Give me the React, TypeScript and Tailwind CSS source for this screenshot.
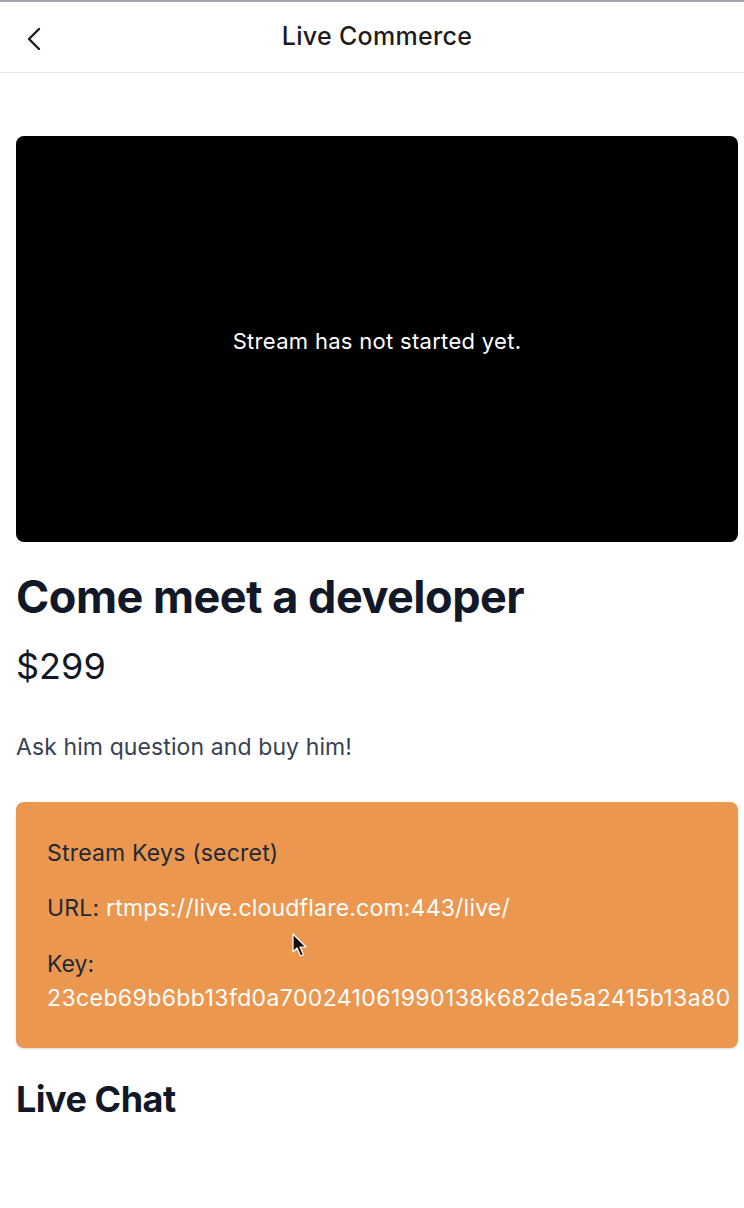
import React from "react";

export default function App() {
  return (
    <div className="w-[744px] min-h-[1208px] bg-white relative overflow-hidden" style={{ fontFamily: "Inter, 'Noto Sans', sans-serif" }}>
      <div className="h-[2px] bg-[#a7a7ad]" />
      <header className="h-[71px] flex items-center justify-center relative border-b border-[#e6e6e6]">
        <button className="absolute left-[22px] top-[22px] text-[#222]">
          <svg width="24" height="30" viewBox="0 0 24 30" fill="none" stroke="#1c1c1e" strokeWidth="2.4" strokeLinecap="round" strokeLinejoin="round">
            <path d="M17 5 L7 15 L17 25" />
          </svg>
        </button>
        <h1 className="text-[25px] text-[#1c1c1e] font-medium tracking-[0.3px] translate-x-[5px]">Live Commerce</h1>
      </header>

      <main className="px-[16px] pt-[63px]">
        <div className="h-[406px] w-[722px] bg-black rounded-[8px] flex items-center justify-center pt-[4px]">
          <span className="text-white text-[22px] tracking-[0.3px]">Stream has not started yet.</span>
        </div>
        <h2 className="mt-[26px] text-[45px] font-bold text-[#111827] leading-[58px] tracking-[-0.5px]">Come meet a developer</h2>
        <p className="mt-[18px] text-[36px] text-[#111827] leading-[44px]">$299</p>
        <p className="mt-[43px] text-[23px] text-[#374151] leading-[32px] tracking-[0.1px]">Ask him question and buy him!</p>

        <div className="relative mt-[39px] w-[722px] h-[246px] bg-[#eb974f] rounded-[8px] px-[31px] pt-[35px] overflow-hidden shadow-[0_1px_2px_rgba(0,0,0,0.15)]">
          <p className="text-[23px] text-[#1f2937] leading-[32px] tracking-[0.2px]">Stream Keys (secret)</p>
          <p className="mt-[23px] text-[23px] text-[#1f2937] leading-[32px] whitespace-nowrap tracking-[0.2px]">
            URL: <span className="text-white">rtmps://live.cloudflare.com:443/live/</span>
          </p>
          <p className="mt-[24px] text-[23px] text-[#1f2937] leading-[32px]">Key:</p>
          <p className="mt-[2px] text-[23px] text-white leading-[32px] whitespace-nowrap tracking-[0.4px]">23ceb69b6bb13fd0a700241061990138k682de5a2415b13a80</p>
          <svg className="absolute left-[276px] top-[131px]" width="16" height="26" viewBox="0 0 16 26">
            <path d="M1 1 L1 19 L5 15 L8.5 23 L11.5 21.8 L8 14 L14 14 Z" fill="#111" stroke="#fff" strokeWidth="1.2" strokeLinejoin="round" />
          </svg>
        </div>

        <h2 className="mt-[29px] text-[36px] font-bold text-[#111827] leading-[44px] tracking-[-0.5px]">Live Chat</h2>
      </main>
    </div>
  );
}
